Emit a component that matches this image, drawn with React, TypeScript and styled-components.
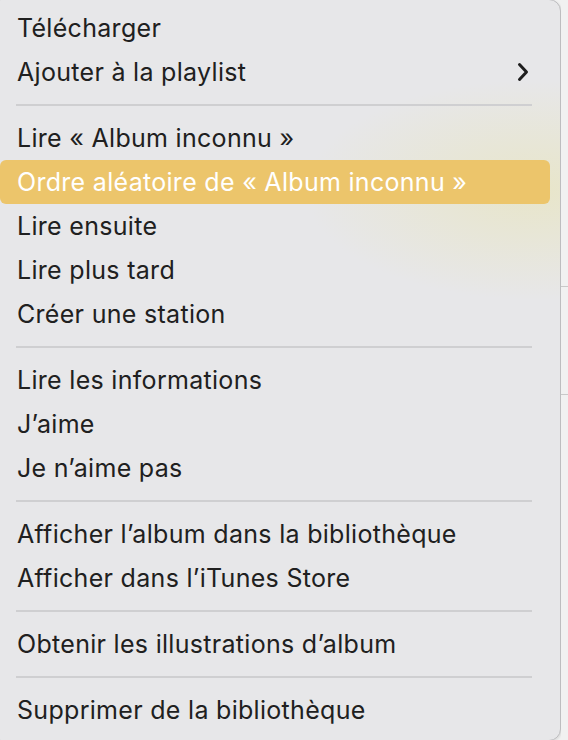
import React from 'react';
import styled, { createGlobalStyle } from 'styled-components';

const GlobalStyle = createGlobalStyle`
  html, body {
    margin: 0;
    padding: 0;
    background: #f1f1f1;
    overflow: hidden;
  }
  body {
    font-family: Inter, "Noto Sans", "Liberation Sans", sans-serif;
    -webkit-font-smoothing: antialiased;
  }
`;

const Page = styled.div`
  display: flex;
  align-items: flex-start;
  width: 568px;
  height: 740px;
  overflow: hidden;
`;

const Menu = styled.div`
  flex: none;
  width: 550px;
  margin: -1px 0 0 -11px;
  padding: 6px 10px 8px;
  background:
    radial-gradient(ellipse 230px 110px at 545px 190px, rgba(232, 229, 196, 0.85), rgba(232, 232, 222, 0) 100%),
    #e7e7e9;
  border: 1px solid #bdbdbf;
  border-radius: 12px;
  box-shadow: 1px 1px 2px rgba(0, 0, 0, 0.08);
`;

const Backdrop = styled.div`
  flex: 1;
  align-self: stretch;
  background:
    linear-gradient(#c9c9c9, #c9c9c9) 0 286px / 100% 1px no-repeat,
    linear-gradient(#c9c9c9, #c9c9c9) 0 394px / 100% 1px no-repeat,
    #f1f1f1;
`;

const Item = styled.div<{ $active?: boolean }>`
  display: flex;
  align-items: center;
  justify-content: space-between;
  height: 44px;
  padding: 0 21px 0 17px;
  border-radius: 6px;
  font-size: 25px;
  letter-spacing: 0.3px;
  color: ${(p) => (p.$active ? '#ffffff' : '#202020')};
  background: ${(p) => (p.$active ? '#ecc56b' : 'transparent')};
  white-space: nowrap;
`;

const Separator = styled.div`
  height: 22px;
  display: flex;
  align-items: center;
  padding: 0 18px 0 16px;

  &::after {
    content: '';
    flex: 1;
    height: 2px;
    background: #cfcfd1;
  }
`;

const Chevron = () => (
  <svg width="12" height="20" viewBox="0 0 12 20" fill="none">
    <polyline
      points="2.5,2.5 9.5,10 2.5,17.5"
      stroke="#1e1e1e"
      strokeWidth="3"
      strokeLinecap="round"
      strokeLinejoin="round"
    />
  </svg>
);

type Entry = { label: string; submenu?: boolean; active?: boolean } | 'sep';

const entries: Entry[] = [
  { label: 'Télécharger' },
  { label: 'Ajouter à la playlist', submenu: true },
  'sep',
  { label: 'Lire « Album inconnu »' },
  { label: 'Ordre aléatoire de « Album inconnu »', active: true },
  { label: 'Lire ensuite' },
  { label: 'Lire plus tard' },
  { label: 'Créer une station' },
  'sep',
  { label: 'Lire les informations' },
  { label: 'J’aime' },
  { label: 'Je n’aime pas' },
  'sep',
  { label: 'Afficher l’album dans la bibliothèque' },
  { label: 'Afficher dans l’iTunes Store' },
  'sep',
  { label: 'Obtenir les illustrations d’album' },
  'sep',
  { label: 'Supprimer de la bibliothèque' },
];

const App: React.FC = () => (
  <>
    <GlobalStyle />
    <Page>
      <Menu>
        {entries.map((e, i) =>
          e === 'sep' ? (
            <Separator key={i} />
          ) : (
            <Item key={i} $active={e.active}>
              <span>{e.label}</span>
              {e.submenu && <Chevron />}
            </Item>
          )
        )}
      </Menu>
      <Backdrop />
    </Page>
  </>
);

export default App;
